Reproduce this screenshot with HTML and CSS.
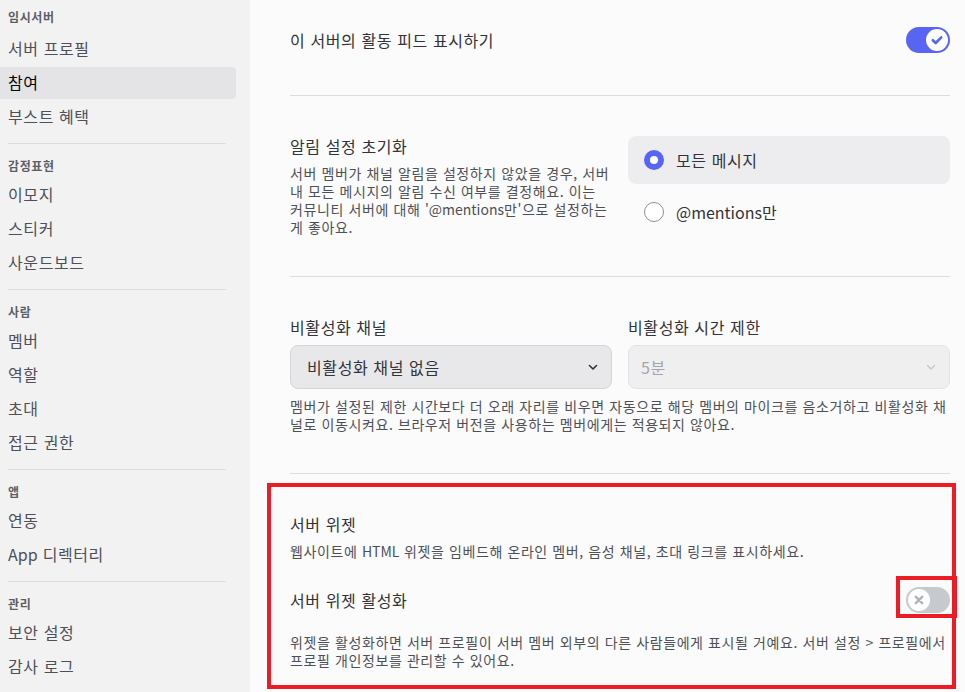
FILE: index.html
```html
<!DOCTYPE html>
<html lang="ko">
<head>
<meta charset="utf-8">
<title>서버 설정 - 참여</title>
<link rel="stylesheet" href="styles.css">
</head>
<body>
<div class="app">
  <nav class="sidebar">
    <div class="nav-section">
      <div class="nav-header first">임시서버</div>
      <div class="nav-item">서버 프로필</div>
      <div class="nav-item selected">참여</div>
      <div class="nav-item">부스트 혜택</div>
    </div>
    <div class="nav-divider"></div>
    <div class="nav-section">
      <div class="nav-header">감정표현</div>
      <div class="nav-item">이모지</div>
      <div class="nav-item">스티커</div>
      <div class="nav-item">사운드보드</div>
    </div>
    <div class="nav-divider"></div>
    <div class="nav-section">
      <div class="nav-header">사람</div>
      <div class="nav-item">멤버</div>
      <div class="nav-item">역할</div>
      <div class="nav-item">초대</div>
      <div class="nav-item">접근 권한</div>
    </div>
    <div class="nav-divider"></div>
    <div class="nav-section">
      <div class="nav-header">앱</div>
      <div class="nav-item">연동</div>
      <div class="nav-item"><span class="latin">App</span> 디렉터리</div>
    </div>
    <div class="nav-divider"></div>
    <div class="nav-section">
      <div class="nav-header">관리</div>
      <div class="nav-item">보안 설정</div>
      <div class="nav-item">감사 로그</div>
    </div>
  </nav>

  <main class="content">
    <section class="block first-block">
      <div class="switch-row">
        <div class="title">이 서버의 활동 피드 표시하기</div>
        <div class="switch on">
          <span class="knob">
            <svg viewBox="0 0 20 20" width="20" height="20"><path d="M5.8 10.2 L8.7 13 L14.2 7.3" fill="none" stroke="#5865f2" stroke-width="2.6" stroke-linecap="round" stroke-linejoin="round"/></svg>
          </span>
        </div>
      </div>
    </section>

    <section class="block two-col">
      <div class="col">
        <div class="title">알림 설정 초기화</div>
        <div class="desc">서버 멤버가 채널 알림을 설정하지 않았을 경우, 서버 내 모든 메시지의 알림 수신 여부를 결정해요. 이는 커뮤니티 서버에 대해 <span class="latin">'@mentions</span>만'으로 설정하는 게 좋아요.</div>
      </div>
      <div class="col radios">
        <div class="radio-item checked">
          <span class="radio"><span class="dot"></span></span>
          <span class="radio-label">모든 메시지</span>
        </div>
        <div class="radio-item">
          <span class="radio"></span>
          <span class="radio-label"><span class="latin">@mentions</span>만</span>
        </div>
      </div>
    </section>

    <section class="block">
      <div class="two-col-inner">
        <div class="col">
          <div class="title">비활성화 채널</div>
          <div class="select">
            <span>비활성화 채널 없음</span>
            <svg viewBox="0 0 12 12" width="12" height="12"><path d="M2.5 4.5 L6 8 L9.5 4.5" fill="none" stroke="#313338" stroke-width="1.6" stroke-linecap="round" stroke-linejoin="round"/></svg>
          </div>
        </div>
        <div class="col">
          <div class="title">비활성화 시간 제한</div>
          <div class="select disabled">
            <span>5분</span>
            <svg viewBox="0 0 12 12" width="12" height="12"><path d="M2.5 4.5 L6 8 L9.5 4.5" fill="none" stroke="#c4c6cb" stroke-width="1.2" stroke-linecap="round" stroke-linejoin="round"/></svg>
          </div>
        </div>
      </div>
      <div class="desc">멤버가 설정된 제한 시간보다 더 오래 자리를 비우면 자동으로 해당 멤버의 마이크를 음소거하고 비활성화 채널로 이동시켜요. 브라우저 버전을 사용하는 멤버에게는 적용되지 않아요.</div>
    </section>

    <section class="block widget highlight">
      <div class="title">서버 위젯</div>
      <div class="desc">웹사이트에 <span class="latin">HTML</span> 위젯을 임베드해 온라인 멤버, 음성 채널, 초대 링크를 표시하세요.</div>
      <div class="switch-row widget-row">
        <div class="title">서버 위젯 활성화</div>
        <div class="switch off highlight-small">
          <span class="knob">
            <svg viewBox="0 0 20 20" width="20" height="20"><path d="M6.8 6.8 L13.2 13.2 M13.2 6.8 L6.8 13.2" fill="none" stroke="#aeb3ba" stroke-width="2.4" stroke-linecap="round"/></svg>
          </span>
        </div>
      </div>
      <div class="desc widget-note">위젯을 활성화하면 서버 프로필이 서버 멤버 외부의 다른 사람들에게 표시될 거예요. 서버 설정 &gt; 프로필에서 프로필 개인정보를 관리할 수 있어요.</div>
    </section>
  </main>
</div>
</body>
</html>
```

FILE: styles.css
```css
* { box-sizing: border-box; }

html, body {
  margin: 0;
  padding: 0;
  height: 100%;
  overflow: hidden;
}

body {
  font-family: "Noto Sans CJK KR", "Noto Sans", sans-serif;
  letter-spacing: 0.6px;
  color: #313338;
  background: #fbfbfb;
}

.latin {
  letter-spacing: 0;
}

.app {
  display: flex;
  height: 692px;
  overflow: hidden;
}

/* Sidebar */
.sidebar {
  width: 250px;
  flex: 0 0 250px;
  background: #f2f2f3;
  padding-right: 14px;
}

.nav-header {
  font-size: 12px;
  line-height: 16px;
  font-weight: 700;
  color: #5c5e66;
  padding: 14px 8px 5px;
}

.nav-header.first {
  padding-top: 9px;
  padding-bottom: 8px;
}

.nav-item {
  height: 32px;
  line-height: 30px;
  margin-bottom: 2px;
  padding-left: 8px;
  font-size: 16px;
  color: #4e5058;
  border-radius: 0 4px 4px 0;
}

.nav-item.selected {
  background: #e4e4e6;
  color: #060607;
}

.nav-divider {
  height: 1px;
  background: #dcdde0;
  margin: 10px 10px 0 8px;
}

/* Content */
.content {
  flex: 1;
  padding: 0 15px 0 40px;
}

.block {
  padding: 40px 0;
  border-bottom: 1px solid #dcdde0;
}

.block.first-block {
  padding-top: 25px;
}

.title {
  font-size: 16px;
  line-height: 20px;
  color: #313338;
}

.desc {
  font-size: 14px;
  line-height: 18px;
  color: #4e5058;
  margin-top: 8px;
}

.switch-row {
  display: flex;
  align-items: center;
  justify-content: space-between;
  height: 30px;
}

.switch {
  width: 44px;
  height: 26px;
  border-radius: 13px;
  display: flex;
  align-items: center;
  padding: 0 2px;
}

.switch.on {
  background: #5865f2;
  justify-content: flex-end;
}

.switch.off {
  background: #c6cacf;
  justify-content: flex-start;
}

.knob {
  width: 22px;
  height: 22px;
  border-radius: 50%;
  background: #ffffff;
  display: flex;
  align-items: center;
  justify-content: center;
}

/* two column sections */
.two-col,
.two-col-inner {
  display: grid;
  grid-template-columns: 1fr 1fr;
  column-gap: 16px;
}

.radios {
  display: flex;
  flex-direction: column;
  gap: 4px;
}

.radio-item {
  height: 48px;
  display: flex;
  align-items: center;
  gap: 12px;
  padding: 0 16px;
  border-radius: 8px;
}

.radio-item.checked {
  background: #ededef;
}

.radio {
  width: 20px;
  height: 20px;
  border-radius: 50%;
  border: 1px solid #8e9097;
  background: #ffffff;
  display: flex;
  align-items: center;
  justify-content: center;
}

.radio-item.checked .radio {
  border: none;
  background: #5865f2;
}

.dot {
  width: 8px;
  height: 8px;
  border-radius: 50%;
  background: #ffffff;
}

.radio-label {
  font-size: 16px;
  line-height: 20px;
  color: #313338;
}

.select {
  margin-top: 8px;
  height: 44px;
  border: 1px solid #d4d5d9;
  border-radius: 8px;
  background: #e8e8ea;
  display: flex;
  align-items: center;
  justify-content: space-between;
  padding: 0 12px 0 16px;
  font-size: 16px;
  color: #313338;
}

.select.disabled {
  background: #efeff0;
  border-color: #e2e3e6;
  color: #a3a5ab;
  padding-left: 12px;
}

/* widget section */
.widget {
  border-bottom: none;
  padding-bottom: 20px;
}

.widget-row {
  margin-top: 27px;
  height: 26px;
}

.widget-note {
  margin-top: 20px;
}

.highlight {
  position: relative;
}

.highlight::before {
  content: "";
  position: absolute;
  top: 9px;
  left: -23px;
  right: -6px;
  bottom: 0;
  border: 4px solid #ed1c24;
  pointer-events: none;
}

.highlight-small {
  position: relative;
}

.highlight-small::after {
  content: "";
  position: absolute;
  top: -11px;
  bottom: -5px;
  left: -10px;
  right: -7px;
  border: 4px solid #ed1c24;
  pointer-events: none;
}
```
